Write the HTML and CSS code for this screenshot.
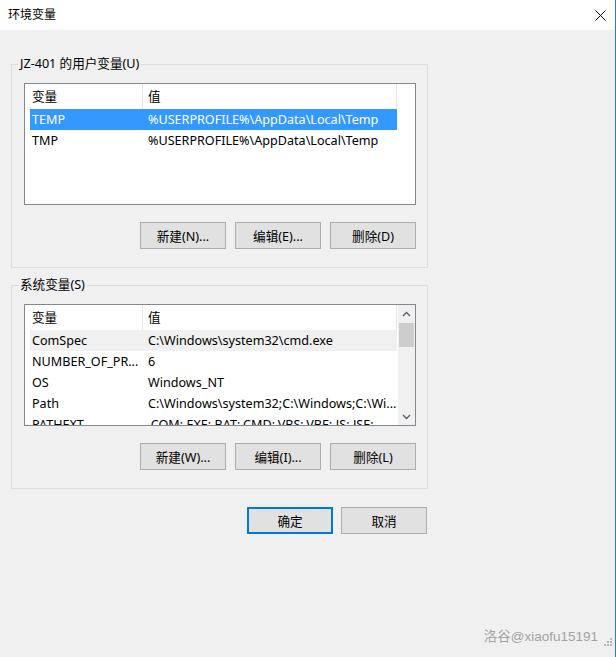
FILE: index.html
```html
<!DOCTYPE html>
<html lang="zh-CN">
<head>
<meta charset="utf-8">
<title>环境变量</title>
<link rel="stylesheet" href="styles.css">
</head>
<body>
<div class="window">
  <header class="titlebar">
    <span class="title">环境变量</span>
    <span class="close" aria-label="关闭">
      <svg width="11" height="11" viewBox="0 0 11 11"><path d="M0.5 0.5 L10.5 10.5 M10.5 0.5 L0.5 10.5" stroke="#000" stroke-width="1" fill="none"/></svg>
    </span>
  </header>
  <main class="content">
    <fieldset class="group">
      <legend>JZ-401 的用户变量(U)</legend>
      <div class="list">
        <div class="list-main">
          <div class="list-head"><div class="h1">变量</div><div class="h2">值</div></div>
          <div class="row selected"><div class="c1">TEMP</div><div class="c2">%USERPROFILE%\AppData\Local\Temp</div></div>
          <div class="row"><div class="c1">TMP</div><div class="c2">%USERPROFILE%\AppData\Local\Temp</div></div>
        </div>
      </div>
      <div class="btn-row">
        <button class="btn">新建(N)...</button>
        <button class="btn">编辑(E)...</button>
        <button class="btn">删除(D)</button>
      </div>
    </fieldset>
    <fieldset class="group group-sys">
      <legend>系统变量(S)</legend>
      <div class="list">
        <div class="list-main">
          <div class="list-head"><div class="h1">变量</div><div class="h2">值</div></div>
          <div class="row hot"><div class="c1">ComSpec</div><div class="c2">C:\Windows\system32\cmd.exe</div></div>
          <div class="row"><div class="c1">NUMBER_OF_PR...</div><div class="c2">6</div></div>
          <div class="row"><div class="c1">OS</div><div class="c2">Windows_NT</div></div>
          <div class="row"><div class="c1">Path</div><div class="c2">C:\Windows\system32;C:\Windows;C:\Wi...</div></div>
          <div class="row"><div class="c1">PATHEXT</div><div class="c2">.COM;.EXE;.BAT;.CMD;.VBS;.VBE;.JS;.JSE;</div></div>
        </div>
        <div class="scrollbar">
          <div class="sb-btn"><svg width="9" height="6" viewBox="0 0 9 6"><path d="M1 5 L4.5 1.5 L8 5" stroke="#606060" stroke-width="1.4" fill="none"/></svg></div>
          <div class="sb-track"><div class="sb-thumb"></div></div>
          <div class="sb-btn"><svg width="9" height="6" viewBox="0 0 9 6"><path d="M1 1 L4.5 4.5 L8 1" stroke="#606060" stroke-width="1.4" fill="none"/></svg></div>
        </div>
      </div>
      <div class="btn-row">
        <button class="btn">新建(W)...</button>
        <button class="btn">编辑(I)...</button>
        <button class="btn">删除(L)</button>
      </div>
    </fieldset>
    <div class="footer">
      <button class="btn default">确定</button>
      <button class="btn">取消</button>
    </div>
  </main>
  <div class="watermark">洛谷@xiaofu15191</div>
  <svg class="grip" width="8" height="8" viewBox="0 0 8 8">
    <rect x="6" y="0" width="2" height="2" fill="#b8b8b8"/>
    <rect x="3" y="3" width="2" height="2" fill="#b8b8b8"/>
    <rect x="6" y="3" width="2" height="2" fill="#b8b8b8"/>
    <rect x="0" y="6" width="2" height="2" fill="#b8b8b8"/>
    <rect x="3" y="6" width="2" height="2" fill="#b8b8b8"/>
    <rect x="6" y="6" width="2" height="2" fill="#b8b8b8"/>
  </svg>
</div>
</body>
</html>
```
FILE: styles.css
```css
* { box-sizing: border-box; }
html, body { margin: 0; padding: 0; }
body {
  width: 616px;
  height: 657px;
  overflow: hidden;
  background: #f0f0f0;
  font-family: "Noto Sans", "Noto Sans CJK SC", sans-serif;
  font-size: 12.6px;
  color: #000;
}
.window {
  position: relative;
  width: 616px;
  height: 657px;
  background: #f0f0f0;
  border-right: 1px solid #1b80d8;
}
.titlebar {
  height: 30px;
  background: #fff;
  display: flex;
  align-items: center;
  justify-content: space-between;
  padding: 0 9px 0 8px;
}
.title { font-size: 12px; line-height: 30px; }
.close { display: flex; width: 11px; height: 11px; }

.content { padding: 25px 0 0 11px; }

.group {
  margin: 0;
  width: 417px;
  min-width: 0;
  border: 1px solid #dcdcdc;
  padding: 10px 11px 18px 12px;
}
.group legend {
  padding: 0 2px;
  margin-left: -6px;
  line-height: 18px;
}
.group-sys { margin-top: 8px; }

.list {
  height: 122px;
  border: 1px solid #828790;
  background: #fff;
  display: flex;
  overflow: hidden;
}
.list-main { width: 372px; flex: none; overflow: hidden; }
.list-head { display: flex; height: 25px; line-height: 25px; }
.h1 { width: 118px; padding-left: 7px; border-right: 1px solid #e5e5e5; }
.h2 { width: 254px; padding-left: 5px; border-right: 1px solid #e5e5e5; }

.row {
  display: flex;
  margin-left: 5px;
  width: 367px;
  height: 21px;
  line-height: 21px;
}
.row.selected { background: #3399ff; color: #fff; }
.row.hot { background: #f0f0f0; }
.c1 { width: 112px; flex: none; padding-left: 2px; white-space: nowrap; overflow: hidden; }
.c2 { flex: 1; padding-left: 6px; white-space: nowrap; overflow: hidden; }

.scrollbar {
  width: 17px;
  margin-left: auto;
  display: flex;
  flex-direction: column;
  background: #f0f0f0;
}
.sb-btn { height: 17px; display: flex; align-items: center; justify-content: center; }
.sb-track { flex: 1; }
.sb-thumb { margin: 1px 1px 0; height: 24px; background: #cdcdcd; }

.btn-row {
  display: flex;
  justify-content: flex-end;
  gap: 9px;
  margin-top: 17px;
}
.btn {
  width: 86px;
  height: 27px;
  padding: 0;
  margin: 0;
  background: #e1e1e1;
  border: 1px solid #adadad;
  font-family: inherit;
  font-size: 12.6px;
  color: #000;
}
.btn.default { border: 2px solid #0078d7; }

.footer {
  width: 416px;
  display: flex;
  justify-content: flex-end;
  gap: 8px;
  margin-top: 18px;
}

.watermark {
  position: absolute;
  right: 17px;
  top: 628px;
  font-family: "Liberation Sans", "Noto Sans CJK SC", sans-serif;
  font-size: 13.5px;
  line-height: 18px;
  color: #a3a3a3;
}
.grip { position: absolute; right: 3px; bottom: 11px; }
```
